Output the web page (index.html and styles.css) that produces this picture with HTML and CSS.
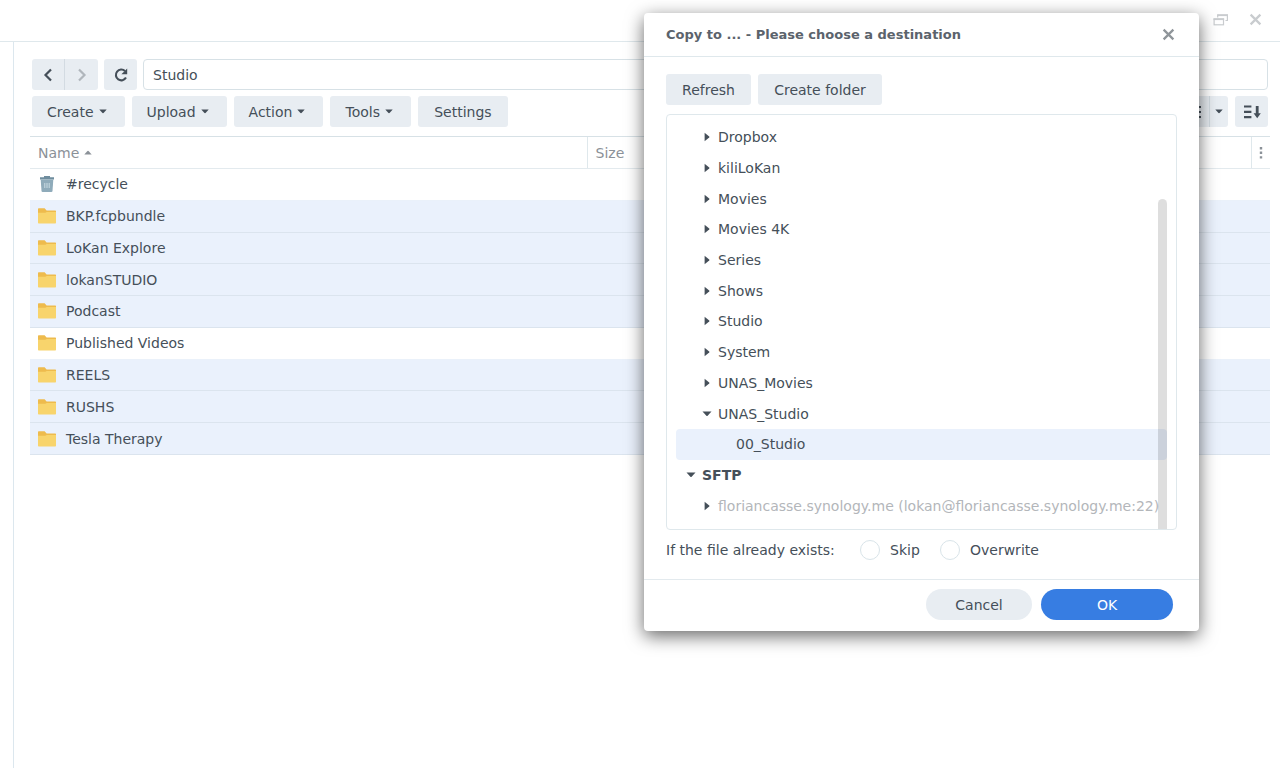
FILE: index.html
```html
<!DOCTYPE html>
<html lang="en">
<head>
<meta charset="utf-8">
<title>File Station</title>
<link rel="stylesheet" href="styles.css">
</head>
<body>
<svg class="defs" aria-hidden="true">
  <symbol id="down" viewBox="0 0 8 5"><path d="M0.3 0.5H7.7L5 3.6Q4 4.7 3 3.6Z"/></symbol>
  <symbol id="up" viewBox="0 0 8 5"><path d="M0.3 4.5H7.7L5 1.4Q4 0.3 3 1.4Z"/></symbol>
  <symbol id="fold" viewBox="0 0 10 10"><path d="M2.6 0.7V9.3L7.2 5.6Q7.8 5 7.2 4.4Z"/></symbol>
  <symbol id="open" viewBox="0 0 10 10"><path d="M0.5 2.6H9.5L5.6 6.8Q5 7.4 4.4 6.8Z"/></symbol>
  <symbol id="folder" viewBox="0 0 18 16"><path fill="#eebb4d" d="M0 1Q0 .3.7.3H6.6L8.6 2.4H17.3Q18 2.4 18 3.1V9H0Z"/><path fill="#f8d46c" d="M0 4.7H7.3L8.8 4H18V14.8Q18 15.5 17.3 15.5H.7Q0 15.5 0 14.8Z"/></symbol>
  <symbol id="cross" viewBox="0 0 12 12"><path d="M1.5 1.5L10.5 10.5M10.5 1.5L1.5 10.5" fill="none" stroke="currentColor" stroke-width="2.1"/></symbol>
</svg>
<div class="window">
  <header class="titlebar">
    <button class="win-btn" aria-label="Restore"><svg class="line" width="16" height="12" viewBox="0 0 16 12"><path d="M4.7 3.5V1H14.4V6.5H12.5" stroke-width="1.2"/><path d="M4.2 1.2H15" stroke-width="1.8"/><rect x="1.1" y="5" width="9.4" height="5.8" stroke-width="1.2"/><path d="M.5 5.2H11.1" stroke-width="1.8"/></svg></button>
    <button class="win-btn" aria-label="Close"><svg width="13" height="13"><use href="#cross"/></svg></button>
  </header>
  <div class="body">
    <aside class="side"></aside>
    <main class="main">
      <div class="bar address">
        <div class="group">
          <button class="btn square" aria-label="Back"><svg class="line" width="10" height="14" viewBox="0 0 10 14"><path d="M8 1.5L2.5 7L8 12.5" stroke-width="2.2"/></svg></button>
          <button class="btn square faded" aria-label="Forward"><svg class="line" width="10" height="14" viewBox="0 0 10 14"><path d="M2 1.5L7.5 7L2 12.5" stroke-width="2.2"/></svg></button>
        </div>
        <button class="btn square" aria-label="Reload"><svg width="16" height="16" viewBox="0 0 16 16"><path d="M13 10.6A5.4 5.4 0 1 1 12 4" fill="none" stroke="currentColor" stroke-width="2.1"/><path d="M14.2 1.4V7.2H8.4Z"/></svg></button>
        <input class="path" type="text" value="Studio" aria-label="Path">
      </div>
      <div class="bar tools">
        <button class="btn drop">Create<svg class="caret"><use href="#down"/></svg></button>
        <button class="btn drop">Upload<svg class="caret"><use href="#down"/></svg></button>
        <button class="btn drop">Action<svg class="caret"><use href="#down"/></svg></button>
        <button class="btn drop">Tools<svg class="caret"><use href="#down"/></svg></button>
        <button class="btn wide">Settings</button>
        <div class="group views">
          <button class="btn square" aria-label="List view"><svg class="line" width="16" height="12" viewBox="0 0 16 12"><path d="M0 1H16M0 6H16M0 11H16" stroke-width="2"/></svg></button>
          <button class="btn narrow" aria-label="View options"><svg class="caret"><use href="#down"/></svg></button>
        </div>
        <button class="btn square" aria-label="Sort"><svg width="18" height="14" viewBox="0 0 18 14"><path d="M1 1.5H8.4M1 6.8H8.4M1 12.1H8.4" stroke="currentColor" stroke-width="2.2"/><path d="M12.8 1H15.6V8.3H17.8L14.2 13.3L10.6 8.3H12.8Z"/></svg></button>
      </div>
      <table class="files">
        <thead>
          <tr><th class="c-name">Name<svg class="caret"><use href="#up"/></svg></th><th class="c-size">Size</th><th class="c-more"><button class="more" aria-label="Columns"><svg width="4" height="12" viewBox="0 0 4 12"><path d="M.8 0H3.2V2.4H.8ZM.8 4.6H3.2V7H.8ZM.8 9.2H3.2V11.6H.8Z"/></svg></button></th></tr>
        </thead>
        <tbody>
          <tr><td colspan="3"><svg class="trash" viewBox="0 0 18 16"><path fill="#6f8d9e" d="M6 0H12V1.3H16V3.6H2V1.3H6Z"/><path fill="#8fabba" d="M2.7 3.6H15.3L14.5 15Q14.4 16 13.4 16H4.6Q3.6 16 3.5 15Z"/><path d="M6.8 7V12M9 7V12M11.2 7V12" stroke="#c9dbe3"/></svg>#recycle</td></tr>
          <tr class="on"><td colspan="3"><svg class="ico"><use href="#folder"/></svg>BKP.fcpbundle</td></tr>
          <tr class="on"><td colspan="3"><svg class="ico"><use href="#folder"/></svg>LoKan Explore</td></tr>
          <tr class="on"><td colspan="3"><svg class="ico"><use href="#folder"/></svg>lokanSTUDIO</td></tr>
          <tr class="on"><td colspan="3"><svg class="ico"><use href="#folder"/></svg>Podcast</td></tr>
          <tr><td colspan="3"><svg class="ico"><use href="#folder"/></svg>Published Videos</td></tr>
          <tr class="on"><td colspan="3"><svg class="ico"><use href="#folder"/></svg>REELS</td></tr>
          <tr class="on"><td colspan="3"><svg class="ico"><use href="#folder"/></svg>RUSHS</td></tr>
          <tr class="on"><td colspan="3"><svg class="ico"><use href="#folder"/></svg>Tesla Therapy</td></tr>
        </tbody>
      </table>
    </main>
  </div>
</div>

<section class="dialog" role="dialog" aria-labelledby="dlg-title">
  <header class="dlg-head">
    <h1 id="dlg-title">Copy to ... - Please choose a destination</h1>
    <button class="dlg-close" aria-label="Close dialog"><svg width="13" height="13"><use href="#cross"/></svg></button>
  </header>
  <div class="dlg-body">
    <div class="bar">
      <button class="btn refresh">Refresh</button>
      <button class="btn create">Create folder</button>
    </div>
    <div class="tree-box">
      <ul class="tree">
        <li><svg class="arrow"><use href="#fold"/></svg>Dropbox</li>
        <li><svg class="arrow"><use href="#fold"/></svg>kiliLoKan</li>
        <li><svg class="arrow"><use href="#fold"/></svg>Movies</li>
        <li><svg class="arrow"><use href="#fold"/></svg>Movies 4K</li>
        <li><svg class="arrow"><use href="#fold"/></svg>Series</li>
        <li><svg class="arrow"><use href="#fold"/></svg>Shows</li>
        <li><svg class="arrow"><use href="#fold"/></svg>Studio</li>
        <li><svg class="arrow"><use href="#fold"/></svg>System</li>
        <li><svg class="arrow"><use href="#fold"/></svg>UNAS_Movies</li>
        <li><svg class="arrow"><use href="#open"/></svg>UNAS_Studio</li>
        <li class="leaf">00_Studio</li>
        <li class="root"><svg class="arrow"><use href="#open"/></svg>SFTP</li>
        <li class="off"><svg class="arrow"><use href="#fold"/></svg>floriancasse.synology.me (lokan@floriancasse.synology.me:22)</li>
      </ul>
      <div class="thumb"></div>
    </div>
    <div class="exists" role="radiogroup" aria-labelledby="exists-label">
      <span id="exists-label" class="exists-label">If the file already exists:</span>
      <label class="choice"><input type="radio" name="exists">Skip</label>
      <label class="choice"><input type="radio" name="exists">Overwrite</label>
    </div>
  </div>
  <footer class="dlg-foot">
    <button class="pill cancel">Cancel</button>
    <button class="pill ok">OK</button>
  </footer>
</section>
</body>
</html>
```
FILE: styles.css
```css
* { box-sizing: border-box; }
body {
  margin: 0;
  font: 14px/20px "DejaVu Sans", Verdana, sans-serif;
  color: #454f59;
  background: #fff;
}
button, input { font: inherit; color: inherit; margin: 0; }
button { border: 0; padding: 0; background: none; }
svg { display: block; flex: none; fill: currentColor; }
.line { fill: none; stroke: currentColor; }
.defs { position: absolute; width: 0; height: 0; }

.window { display: flex; flex-direction: column; min-height: 100vh; }
.titlebar {
  display: flex;
  justify-content: flex-end;
  align-items: center;
  gap: 20px;
  height: 42px;
  padding: 0 18px 2px 0;
  border-bottom: 1px solid #dfe8ec;
}
.win-btn { color: #c9cccf; }
.body { display: flex; flex: 1; }
.side { flex: none; width: 14px; border-right: 1px solid #dce7ee; }
.main { flex: 1; min-width: 0; padding: 17px 10px 0 16px; }

.bar { display: flex; gap: 7px; }
.main .bar { padding: 0 2px; }
.btn {
  display: flex;
  align-items: center;
  justify-content: center;
  height: 31px;
  padding: 0 15px;
  border-radius: 3px;
  background: #e8edf2;
}
.square { width: 33px; padding: 0; }
.narrow { width: 18px; padding: 0; }
.drop { padding-right: 18px; }
.wide { width: 90px; }
.refresh { width: 85px; }
.create { width: 124px; }
.faded { color: #b0b6bc; }
.caret { width: 8px; height: 5px; }
.drop .caret { margin-left: 5px; }
.group { display: flex; }
.group .btn:first-child { border-radius: 3px 0 0 3px; border-right: 1px solid #d3dbe2; }
.group .btn:last-child { border-radius: 0 3px 3px 0; }
.address { gap: 6px; }
.path {
  flex: 1;
  min-width: 0;
  height: 31px;
  padding: 0 9px;
  border: 1px solid #d7e1e6;
  border-radius: 4px;
  background: #fff;
}
.tools { margin-top: 6px; }
.views { margin-left: auto; }

.files {
  width: 100%;
  height: 319px;
  margin-top: 9px;
  border-collapse: collapse;
  table-layout: fixed;
}
.files th {
  height: 32px;
  padding: 0 8px;
  border-top: 1px solid #d7e1e6;
  border-bottom: 1px solid #e3eaee;
  text-align: left;
  font-weight: normal;
  color: #8b9198;
}
.files th + th { border-left: 1px solid #dfe8ec; }
.c-name { width: 557px; }
.c-more { width: 19px; }
.files .c-more { padding: 0 7px; }
.more { display: block; }
.files th .caret { display: inline-block; margin-left: 5px; vertical-align: 3px; }
.files td { padding: 0 8px; border-bottom: 1px solid #dbe4ee; }
.files tr:not(.on) td { border-bottom-color: #eaf1fa; }
.on { background: #eaf1fc; }
.ico, .trash { display: inline-block; width: 18px; height: 16px; margin-right: 10px; vertical-align: -3px; }

.dialog {
  position: absolute;
  top: 13px;
  right: 81px;
  width: 555px;
  border-radius: 4px;
  background: #fff;
  box-shadow: 0 5px 18px rgba(0, 0, 0, .6);
}
.dlg-head {
  display: flex;
  align-items: center;
  justify-content: space-between;
  height: 44px;
  padding: 0 24px 0 22px;
  border-bottom: 1px solid #dfe8ec;
}
.dlg-head h1 { margin: 0; font-size: 13px; font-weight: bold; color: #5b636c; }
.dlg-close { color: #8f959a; }
.dlg-body { padding: 17px 22px 0; }
.dlg-body .bar { gap: 7px; }
.tree-box {
  position: relative;
  margin-top: 9px;
  padding: 7px 9px 8px;
  border: 1px solid #dfe8ec;
  border-radius: 4px;
}
.tree {
  display: grid;
  grid-auto-rows: 1fr;
  height: 399px;
  margin: 0;
  padding: 0;
  list-style: none;
}
.tree li {
  display: flex;
  align-items: center;
  gap: 6px;
  padding-left: 26px;
  border-radius: 4px;
  overflow: hidden;
  white-space: nowrap;
}
.tree .leaf { padding-left: 60px; background: #eaf1fc; }
.tree .root { padding-left: 10px; font-weight: bold; }
.tree .off { color: #b3b6ba; }
.arrow { width: 10px; height: 10px; color: #454f59; }
.thumb {
  position: absolute;
  right: 9px;
  top: 84px;
  bottom: 0;
  width: 9px;
  border-radius: 5px 5px 0 0;
  background: rgba(0, 0, 0, .13);
}
.exists { display: flex; align-items: center; height: 40px; }
.exists-label { width: 194px; }
.choice { display: flex; align-items: center; gap: 10px; width: 80px; white-space: nowrap; }
.choice input {
  appearance: none;
  flex: none;
  width: 20px;
  height: 20px;
  border: 1px solid #d9e4e9;
  border-radius: 50%;
  background: #fff;
}
.dlg-foot {
  display: flex;
  justify-content: flex-end;
  gap: 9px;
  margin-top: 9px;
  padding: 9px 26px 11px;
  border-top: 1px solid #e3eaee;
}
.pill { height: 31px; border-radius: 16px; }
.cancel { width: 106px; background: #e8edf2; }
.ok { width: 132px; background: #377de2; color: #fff; }
```
